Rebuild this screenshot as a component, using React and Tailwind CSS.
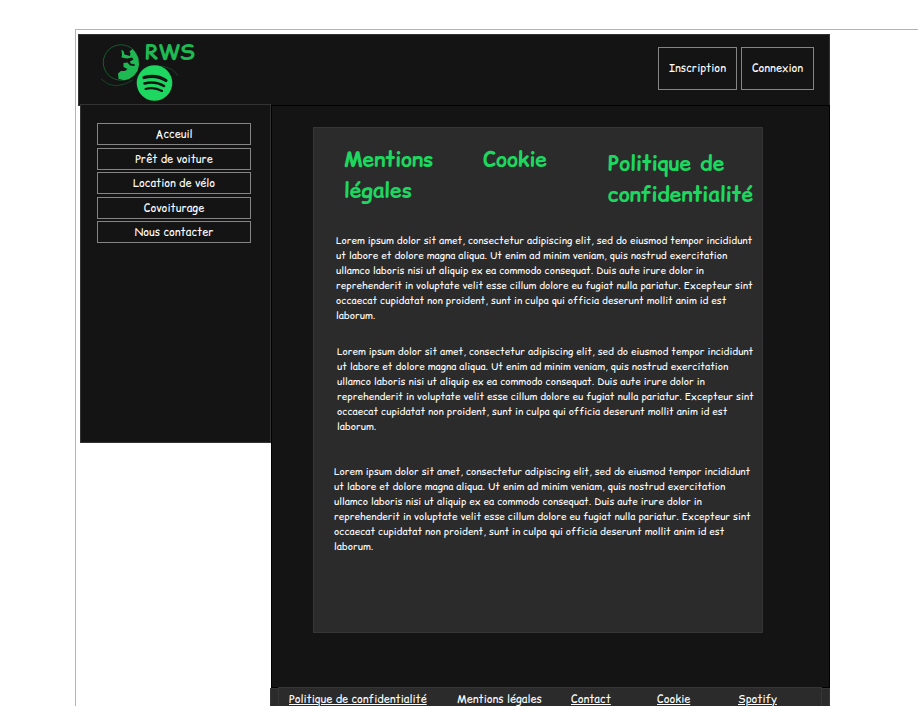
import React from "react";

const menu = ["Acceuil", "Prêt de voiture", "Location de vélo", "Covoiturage", "Nous contacter"];

const lorem = [
  "Lorem ipsum dolor sit amet, consectetur adipiscing elit, sed do eiusmod tempor incididunt",
  "ut labore et dolore magna aliqua. Ut enim ad minim veniam, quis nostrud exercitation",
  "ullamco laboris nisi ut aliquip ex ea commodo consequat. Duis aute irure dolor in",
  "reprehenderit in voluptate velit esse cillum dolore eu fugiat nulla pariatur. Excepteur sint",
  "occaecat cupidatat non proident, sunt in culpa qui officia deserunt mollit anim id est",
  "laborum.",
];

function Lorem({ className }) {
  return (
    <p className={`text-[10px] leading-[15px] whitespace-nowrap text-white ${className}`}>
      {lorem.map((line) => (
        <span key={line} className="block">
          {line}
        </span>
      ))}
    </p>
  );
}

function Logo() {
  return (
    <svg viewBox="0 0 110 70" className="h-[70px] w-[110px]" role="img" aria-label="RWS">
      <circle cx="25" cy="27.5" r="17.7" fill="none" stroke="#185b30" strokeWidth="1" />
      <path d="M5 44 Q18 57 37 45" fill="none" stroke="#15442a" strokeWidth="1" />
      <path d="M46 40 Q54 29 68 31.5 Q78 34 82 41" fill="none" stroke="#15442a" strokeWidth="1" />
      <path
        d="M36.5 14 L39 17 L42 22.5 L43 29.5 L41.5 36 L38 40.5 L33 44 L28 45.3 L22.5 43.7 L22 38.5 L25 36 L29 36 L31.5 34 L27.5 32 L27.5 28 L31.5 27.5 L34 30.5 L38.5 31 L39 29.5 L34.5 28.5 L34 26.5 L37.5 24.5 L36 22.5 L31 23.5 L25.5 22.5 L26 20 L25.5 14.8 L27.5 16 L28.5 19.5 L34 21 L34.5 18.5 L33.5 16.5 Z"
        fill="#1fb954"
      />
      <text x="49" y="25" fontSize="21" fontWeight="700" fill="#1fb954">
        RWS
      </text>
      <circle cx="58.5" cy="48" r="17.8" fill="#1ed760" />
      <g fill="none" stroke="#141414" strokeLinecap="round">
        <path d="M48 42.5 Q60 39 70 45.5" strokeWidth="3.2" />
        <path d="M48.5 48.5 Q59 45.5 68 51" strokeWidth="2.6" />
        <path d="M49.5 54 Q58 51.5 66 56" strokeWidth="2.1" />
      </g>
    </svg>
  );
}

export default function App() {
  return (
    <div className="flex min-h-screen flex-col bg-white pt-[29px] pl-[75px] font-['Comic_Relief','Comic_Neue',Lato,sans-serif] text-[11px] text-white">
      <div className="flex flex-1 flex-col border-t border-l border-[#b3b3b3] pt-1 pr-[88px] pl-0.5">
        <header className="flex h-[72px] items-start justify-between border border-[#333] bg-[#141414] pr-[15px] pl-[17px]">
          <a href="#accueil" aria-label="RWS">
            <Logo />
          </a>
          <div className="flex gap-1 pt-3">
            <button className="h-[43px] w-[79px] border border-[#858585]">Inscription</button>
            <button className="h-[43px] w-[73px] border border-[#858585]">Connexion</button>
          </div>
        </header>

        <div className="-mt-0.5 flex flex-1 items-start pl-0.5">
          <nav className="h-[339px] w-[191px] flex-none border border-[#333] bg-[#141414] pt-[18px] pr-[19px] pl-4">
            <div className="flex h-[120px] flex-col justify-between">
              {menu.map((label) => (
                <button key={label} className="h-[22px] flex-none border border-[#858585] leading-5">
                  {label}
                </button>
              ))}
            </div>
          </nav>

          <div className="flex min-w-0 flex-1 flex-col self-stretch pt-px">
            <main className="border border-black bg-[#141414] pt-[21px] pr-[66px] pb-[54px] pl-[41px]">
              <section className="h-[506px] border border-[#363636] bg-[#2b2b2b]">
                <div className="grid grid-cols-[139px_125px_1fr] pt-4 pl-[30px] text-[21px] leading-[31px] font-bold text-[#1ed760]">
                  <h2>
                    Mentions
                    <br />
                    légales
                  </h2>
                  <h2>Cookie</h2>
                  <h2 className="pt-1">
                    Politique de
                    <br />
                    confidentialité
                  </h2>
                </div>
                <div>
                  <Lorem className="mt-[23px] pl-[22px]" />
                  <Lorem className="mt-[21px] pl-[23px]" />
                  <Lorem className="mt-[30px] pl-5" />
                </div>
              </section>
            </main>
            <footer className="-ml-px flex-1 border-x border-t border-[#363636] bg-[#2b2b2b] px-[7px]">
              <div className="-mt-0.5 grid h-5 grid-cols-[168px_114px_86px_81px_1fr] border-x border-t border-[#363636] bg-[#2b2b2b] pt-1 pl-2.5 leading-[15px] whitespace-nowrap">
                <a href="#confidentialite" className="underline">Politique de confidentialité</a>
                <a href="#mentions">Mentions légales</a>
                <a href="#contact" className="underline">Contact</a>
                <a href="#cookie" className="underline">Cookie</a>
                <a href="#spotify" className="underline">Spotify</a>
              </div>
            </footer>
          </div>
        </div>
      </div>
    </div>
  );
}
